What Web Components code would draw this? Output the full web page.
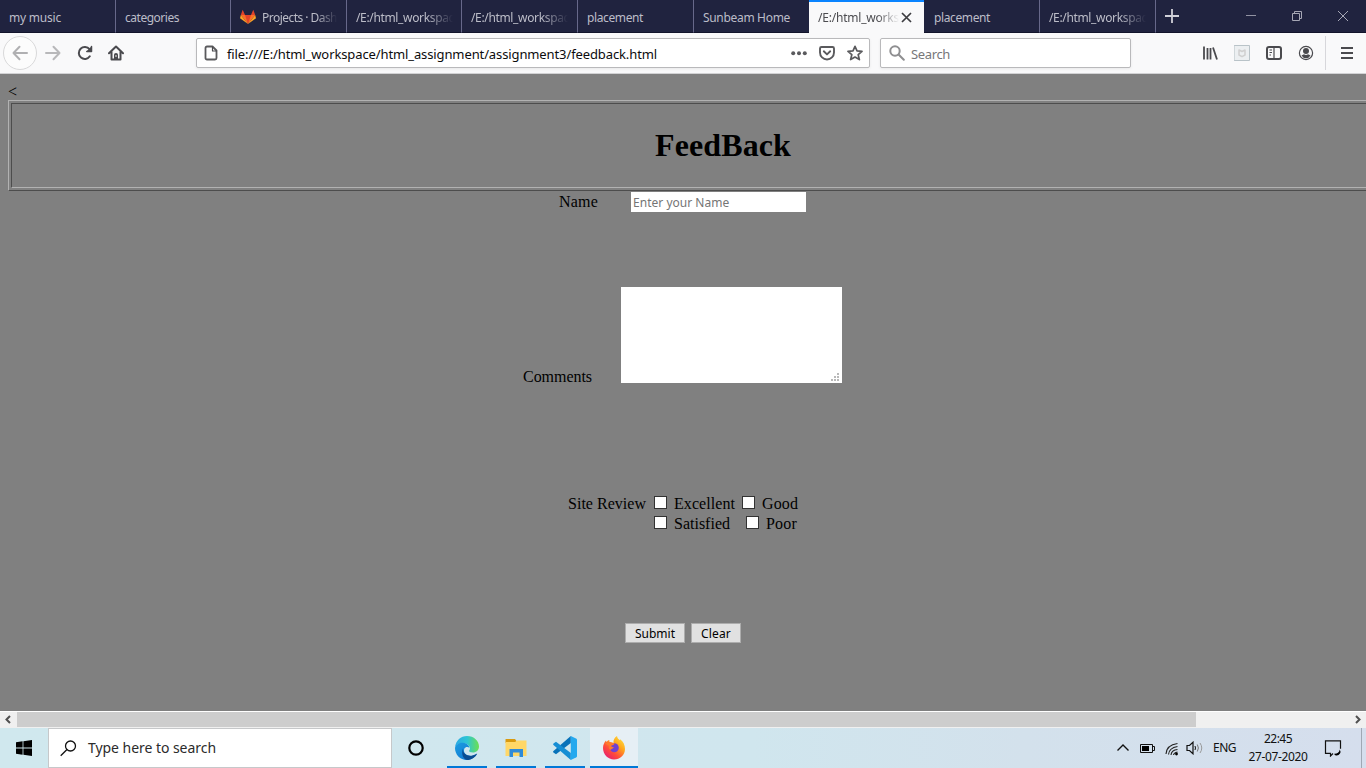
<!DOCTYPE html>
<html lang="en">
<head>
<meta charset="utf-8">
<title>Feedback</title>
<style>
html,body{margin:0;height:100%;overflow:hidden}
</style>
</head>
<body>
<desktop-screen></desktop-screen>
<script>
const define = (name, html, setup) => {
  const t = document.createElement('template');
  t.innerHTML = html;
  customElements.define(name, class extends HTMLElement {
    connectedCallback() {
      if (this.shadowRoot) return;
      this.attachShadow({mode: 'open'}).append(t.content.cloneNode(true));
      if (setup) setup.call(this);
    }
  });
};

/* Single line of text, tracked so that it fills the width in its "w" attribute. */
define('fit-text', `<style>:host{display:block;white-space:nowrap;flex:none}span{display:inline-block;white-space:pre}</style><span><slot></slot></span>`, function () {
  const w = +this.getAttribute('w');
  if (!w) return;
  const s = this.shadowRoot.querySelector('span');
  this.style.width = w + 'px';
  s.style.letterSpacing = '0';
  const r = s.getBoundingClientRect().width;
  if (r) s.style.letterSpacing = ((w - r) / this.textContent.length).toFixed(3) + 'px';
});

define('browser-tab', `<style>
:host{display:flex;box-sizing:border-box;height:33px;padding-left:9px;align-items:center;border-right:1px solid #67688a;border-bottom:1px solid #12142b;color:#bcbdc8;font:12px/18px "Noto Sans",sans-serif;overflow:hidden;flex:none}
:host([last-plain]),:host([active]){border-right:0}
:host([active]){background:#f9f9fa;color:#4c4c50;border-top:2px solid #0a84ff;border-bottom:0;padding-bottom:2px}
.label{padding-top:4px;flex:none;width:98px}
:host([active]) .label{width:82px;padding-top:3px}
:host([icon]) .label{width:76px}
:host([fade]) .label{-webkit-mask:linear-gradient(90deg,#000 72%,transparent 99%);mask:linear-gradient(90deg,#000 72%,transparent 99%)}
.fox{display:none;width:16px;height:16px;margin:2px 6px 0 0;flex:none}
:host([icon]) .fox{display:block}
.x{display:none;width:11px;height:11px;margin:2px 0 0 1px;flex:none}
:host([active]) .x{display:block}
</style>
<svg class="fox" viewBox="0 0 16 16"><path fill="#e24329" d="M8 15 3 6h10z"/><path fill="#fc6d26" d="M8 15 .8 6H5zM8 15l7.200-9H11z"/><path fill="#fca326" d="M.8 6 0 9.200 8 15zM15.200 6l.8 3.200L8 15z"/><path fill="#e24329" d="M.8 6 2.700.8 5 6zM15.200 6 13.300.8 11 6z"/></svg>
<div class="label"><slot></slot></div>
<svg class="x" viewBox="0 0 11 11"><path d="M1 1l9 9M10 1l-9 9" stroke="#3c3c40" stroke-width="1.700"/></svg>`);

define('tab-strip', `<style>
:host{display:flex;height:33px;background:#20233f;box-shadow:inset 0 -1px #12142b;flex:none}
.plus{width:14px;height:14px;margin:9px 0 0 9px}
.win{width:12px;height:12px;margin-top:10px}
</style>
<browser-tab style="width:116px"><fit-text w="52">my music</fit-text></browser-tab>
<browser-tab style="width:115px"><fit-text w="54">categories</fit-text></browser-tab>
<browser-tab icon fade style="width:116px"><fit-text w="75">Projects · Dash</fit-text></browser-tab>
<browser-tab fade style="width:115px"><fit-text w="98">/E:/html_workspac</fit-text></browser-tab>
<browser-tab fade style="width:116px"><fit-text w="98">/E:/html_workspac</fit-text></browser-tab>
<browser-tab style="width:116px"><fit-text w="56">placement</fit-text></browser-tab>
<browser-tab last-plain style="width:115px"><fit-text w="87">Sunbeam Home</fit-text></browser-tab>
<browser-tab active fade style="width:115px"><fit-text w="81">/E:/html_works</fit-text></browser-tab>
<browser-tab style="width:116px;padding-left:10px"><fit-text w="56">placement</fit-text></browser-tab>
<browser-tab fade style="width:116px"><fit-text w="98">/E:/html_workspac</fit-text></browser-tab>
<svg class="plus" viewBox="0 0 14 14"><path d="M7 0v14M0 7h14" stroke="#d0d0d8" stroke-width="1.800"/></svg>
<svg class="win" style="margin-left:66px" viewBox="0 0 12 12"><path d="M1 5.500h10" stroke="#9293a3"/></svg>
<svg class="win" style="margin-left:34px" viewBox="0 0 12 12"><path d="M1.500 3.500h7v7h-7zM3.500 3V1.500h7v7H9" fill="none" stroke="#a6a7b5"/></svg>
<svg class="win" style="margin-left:34px" viewBox="0 0 12 12"><path d="M1 1l10 10M11 1L1 11" stroke="#a6a7b5"/></svg>`);

define('nav-bar', `<style>
:host{display:flex;box-sizing:border-box;height:41px;background:#f9f9fa;border-bottom:1px solid #d2d2d4;align-items:flex-start;flex:none;font:13px/20px "Noto Sans",sans-serif}
svg{display:block;flex:none;width:16px;height:16px;margin-top:12px;fill:none;stroke:#4a4a4e;stroke-width:2;stroke-linecap:round;stroke-linejoin:round}
.back{box-sizing:border-box;width:34px;height:34px;margin:3px 0 0 3px;border:1px solid #d9d9da;border-radius:50%;background:#fcfcfc}
.back svg{margin:8px}
.box{display:flex;box-sizing:border-box;height:30px;margin-top:5px;border:1px solid #b9b9bb;border-radius:2px;background:#fff;box-shadow:0 1px 3px #0001}
.box svg{margin-top:6px}
.url{width:674px;margin-left:72px}.find{width:251px;margin-left:10px}
fit-text{margin-top:5px}
.sep{width:1px;height:34px;margin:3px 0 0 11px;background:#d7d7db}
</style>
<div class="back"><svg viewBox="0 0 16 16" style="stroke:#b0b0b2"><path d="M15 8H1.500M7.500 1.800 1.500 8l6 6.200"/></svg></div>
<svg style="margin-left:8px;stroke:#b8b8ba" viewBox="0 0 16 16"><path d="M1 8h13.500M8.500 1.800l6 6.200-6 6.200"/></svg>
<svg style="margin-left:16px" viewBox="0 0 16 16"><path d="M12.800 11.300A6 6 0 1 1 12.500 4.200"/><path d="M14.800 1v5.500H9.300z" fill="#4a4a4e" stroke="none"/><path d="M14.500 1.500v5H9.800" stroke-width="1.500"/></svg>
<svg style="margin-left:15px" viewBox="0 0 16 16"><path d="M1 8.200l7-6.700 7 6.700M3.500 7v7.500h9V7"/><path d="M6 14V9.500q0-1.500 2-1.500t2 1.500V14z" fill="#4a4a4e" stroke="none"/><path d="M8 10.500v1" stroke="#fff" style="stroke:#fff;stroke-width:1"/></svg>
<div class="box url">
<svg style="margin-left:6px" viewBox="0 0 16 16"><path d="M4 1.500h5.500l4 4V13a1.500 1.500 0 0 1-1.500 1.500H4A1.500 1.500 0 0 1 2.500 13V3A1.500 1.500 0 0 1 4 1.500z" style="stroke:#5a5a5d;stroke-width:1.800"/><path d="M9.500 2v4h4" stroke-width="1.200"/></svg>
<fit-text w="430" style="margin-left:8px;color:#0c0c0d">file:///E:/html_workspace/html_assignment/assignment3/feedback.html</fit-text>
<svg style="margin-left:134px" viewBox="0 0 16 16"><g fill="#5a5a5d" stroke="none"><circle cx="2.200" cy="8.200" r="2"/><circle cx="8" cy="8.200" r="2"/><circle cx="13.800" cy="8.200" r="2"/></g></svg>
<svg style="margin-left:12px" viewBox="0 0 16 16"><path d="M2.500 2h11q1.500 0 1.500 1.500V7.500a7 7 0 0 1-14 0V3.500Q1 2 2.500 2zM4.800 6.300 8 9.400l3.200-3.100" style="stroke:#5a5a5d;stroke-width:1.900"/></svg>
<svg style="margin-left:12px" viewBox="0 0 16 16"><path d="M8 1.300l2 4.600 5 .5-3.800 3.300 1.200 4.900L8 12l-4.400 2.600 1.200-4.900L1 6.400l5-.5z" style="stroke:#5a5a5d;stroke-width:1.700"/></svg>
</div>
<div class="box find">
<svg style="margin-left:8px;stroke:#8e8e90" viewBox="0 0 16 16"><circle cx="6" cy="6" r="4.700"/><path d="M9.800 9.800l5 5"/></svg>
<fit-text w="39" style="margin-left:6px;color:#77777a">Search</fit-text>
</div>
<svg style="margin-left:71px" viewBox="0 0 16 16"><path d="M2 1.500v13M5.500 3v11.500M8.500 3v11.500M11 2.500l4 12" style="stroke-width:1.800;stroke-linecap:butt"/></svg>
<svg style="margin-left:16px;stroke:#b9c3c8;stroke-width:1" viewBox="0 0 16 16"><path d="M.5.500h15v15H.5z" fill="#eceff1"/><path d="M5 5l3 1.500L11 5v5l-3 1.700L5 10z" style="stroke-width:1.500;stroke:#d0d0d0"/></svg>
<svg style="margin-left:16px" viewBox="0 0 16 16"><rect x="1" y="2" width="14" height="12" rx="2"/><path d="M8 2v12M3.500 5h2.500M3.500 7.500h2.500M3.500 10h1.500" style="stroke-width:1.200;stroke-linecap:butt"/></svg>
<svg style="margin-left:16px" viewBox="0 0 16 16"><circle cx="8" cy="8" r="6.600" style="stroke-width:1.200"/><circle cx="8" cy="6" r="3" fill="#4a4a4e" stroke="none"/><path d="M3.500 10.500q1.500-.8 2.500-1.200 2 1.200 4 0 1 .4 2.500 1.200-1.500 2.700-4.500 2.700t-4.500-2.700z" fill="#4a4a4e" stroke="none"/></svg>
<div class="sep"></div>
<svg style="margin-left:14px" viewBox="0 0 16 16"><path d="M1 3h12M1 8h12M1 13h12" style="stroke-linecap:butt"/></svg>`);

define('check-item', `<style>
:host{display:flex;height:20px}
input{appearance:none;box-sizing:border-box;width:13px;height:13px;margin:3px 7px 0 0;border:1px solid #333;background:#fff;flex:none}
label{display:flex;line-height:18px}
</style><label><input type="checkbox"><slot></slot></label>`);

define('feedback-form', `<style>
:host{display:flex;flex-direction:column;box-sizing:border-box;height:637px;padding:9px 0 0 8px;background:#808080;color:#000;overflow:hidden;flex:none;font:16px/18px "Liberation Serif",serif}
.stray{height:17px;flex:none}
.frame{box-sizing:border-box;width:1430px;height:91px;padding:2px;border:1px solid;border-color:#b2b2b2 #4d4d4d #4d4d4d #b2b2b2;flex:none}
.cell{display:flex;justify-content:center;align-items:center;box-sizing:border-box;height:85px;padding-bottom:1px;border:1px solid;border-color:#4d4d4d #b2b2b2 #b2b2b2 #4d4d4d}
h1{margin:0;font-size:32px;line-height:36px}
.row{display:flex;flex:none}
input,textarea,button{box-sizing:border-box;margin:0;border-radius:0;font:12px/16px "Noto Sans",sans-serif}
input{width:175px;height:20px;padding:1px 2px 0;border:0;background:#fff;letter-spacing:.02px}
input::placeholder{color:#757575;opacity:1}
.area{position:relative;display:flex;margin-left:29px}
textarea{width:221px;height:96px;border:0;background:#fff;resize:none;display:block}
.grip{position:absolute;right:3px;bottom:2px;width:8px;height:8px}
button{display:flex;justify-content:center;height:20px;padding:2px 0 0;border:1px solid #adadad;background:#e1e1e1;color:#000}
</style>
<div class="stray">&lt;</div>
<div class="frame"><div class="cell"><h1><fit-text w="136">FeedBack</fit-text></h1></div></div>
<div class="row" style="margin:1px 0 0 551px"><fit-text w="39" style="margin-top:1px">Name</fit-text><input style="margin-left:33px" placeholder="Enter your Name"></div>
<div class="row" style="margin:75px 0 0 515px;align-items:flex-end"><fit-text w="69" style="margin-bottom:-3px">Comments</fit-text>
<div class="area"><textarea></textarea><svg class="grip" viewBox="0 0 8 8"><path fill="#b9b9b9" d="M6 0h2v2H6zM3 3h2v2H3zM6 3h2v2H6zM0 6h2v2H0zM3 6h2v2H3zM6 6h2v2H6z"/></svg></div></div>
<div class="row" style="margin:110px 0 0 560px"><fit-text w="78" style="margin-top:2px">Site Review</fit-text>
<div style="margin-left:8px">
<div class="row"><check-item><fit-text w="61" style="margin-top:2px">Excellent</fit-text></check-item><check-item style="margin-left:7px"><fit-text w="36" style="margin-top:2px">Good</fit-text></check-item></div>
<div class="row"><check-item><fit-text w="56" style="margin-top:2px">Satisfied</fit-text></check-item><check-item style="margin-left:16px"><fit-text w="31" style="margin-top:2px">Poor</fit-text></check-item></div>
</div></div>
<div class="row" style="margin:90px 0 0 617px"><button style="width:60px"><fit-text w="40">Submit</fit-text></button><button style="width:50px;margin-left:6px"><fit-text w="30">Clear</fit-text></button></div>`);

define('scroll-bar', `<style>
:host{display:flex;box-sizing:border-box;height:17px;background:#f0f0f0;border-top:1px solid #fff;flex:none}
svg{width:17px;height:15px;flex:none}
.thumb{width:1179px;height:15px;background:#cdcdcd}
.rest{flex:1}
</style><svg viewBox="0 0 17 15"><path d="M10 4 6.500 7.500 10 11" fill="none" stroke="#505050" stroke-width="2"/></svg><div class="thumb"></div><div class="rest"></div><svg viewBox="0 0 17 15"><path d="M7 4l3.500 3.500L7 11" fill="none" stroke="#505050" stroke-width="2"/></svg>`);

define('task-button', `<style>
:host{display:flex;box-sizing:border-box;width:40px;height:40px;align-items:center;justify-content:center;border-bottom:2px solid #0078d7;padding-top:2px;flex:none}
:host([active]){width:48px;background:#e6eff5}
::slotted(svg){width:24px;height:24px;display:block}
</style><slot></slot>`);

define('task-bar', `<style>
:host{display:flex;height:40px;background:linear-gradient(90deg,#d0e8ee,#d0e6ee 55%,#d3e1ec 75%,#d5deed);flex:none;color:#111;font:12px/18px "Noto Sans",sans-serif}
svg{display:block;flex:none}
.search{display:flex;box-sizing:border-box;width:344px;height:40px;margin-left:16px;background:#fff;border:1px solid #c6c8ca}
.clock{display:flex;flex-direction:column;align-items:center;width:60px;margin:2px 0 0 12px}
.edge{width:1px;height:40px;margin-left:19px;background:#9fa8b4}
</style>
<svg width="16" height="16" style="margin:12px 0 0 16px" viewBox="0 0 16 16"><path d="M0 2.200 6.600 1.300V7.600H0zM7.400 1.200 16 0v7.600H7.400zM0 8.400h6.600v6.300L0 13.800zM7.400 8.400H16V16l-8.600-1.200z"/></svg>
<div class="search"><svg width="17" height="17" style="margin:11px 0 0 11px" viewBox="0 0 17 17"><circle cx="10.500" cy="6" r="5" fill="none" stroke="#111" stroke-width="1.300"/><path d="M7 9.500.7 15.800" stroke="#111" stroke-width="1.300"/></svg>
<fit-text w="128" style="margin:10px 0 0 11px;color:#2b2b2b;font-size:14px">Type here to search</fit-text></div>
<svg width="16" height="16" style="margin:12px 0 0 16px" viewBox="0 0 16 16"><circle cx="8" cy="8" r="6.700" fill="none" stroke="#000" stroke-width="2.200"/></svg>
<task-button style="margin-left:23px"><svg viewBox="0 0 24 24"><defs><linearGradient id="a" x2="1"><stop stop-color="#2aa8e4"/><stop offset=".5" stop-color="#2dc5d5"/><stop offset="1" stop-color="#6de04f"/></linearGradient><linearGradient id="b" y2="1"><stop stop-color="#1c9de0"/><stop offset="1" stop-color="#0e6fd0"/></linearGradient></defs>
<path fill="url(#a)" d="M.1 11C.8 4.500 5.800 0 12 0c7 0 12 5 12 10.500 0 3.800-2.800 6-6 6-3 0-4.300-1-3.800-2 1.200-1.400 1-3.500-.6-5C10 6.200 3 6 .1 11z"/>
<path fill="url(#b)" d="M0 12C.3 8.500 4 6.500 8 6.700c3.500.2 6.300 2.400 6.400 5.300-1-1.600-4-1.500-5.100.8-1.700 4.500 3.200 8 8 7 2-.4 3.700-1.500 4.700-2.300C20.500 21 16.500 24 12 24 5 24 0 18.500 0 12z"/>
<path fill="#0b4d92" d="M8 12.500c-.5 5 4 8 9.500 7 2-.4 3.800-1.400 4.700-2C20.500 21.500 16 24 12 24 8 23 6 18 8 12.500z"/></svg></task-button>
<task-button style="margin-left:9px"><svg viewBox="0 0 24 24"><path fill="#d99a10" d="M1.500 3.500q0-.5.5-.5h9l1.500 2-1 2h-10z"/><path fill="#ffd767" d="M1.500 6h9.500l2-1.500h9.500V20h-21z"/><path fill="#2f8bd8" d="M5.500 13h13.500v8h-3.500v-4.500H9V21H5.500z"/></svg></task-button>
<task-button style="margin-left:9px"><svg viewBox="0 0 24 24"><path fill="#0872b9" d="M17.800 0v7L3 18.200.5 16.500q-.8-.8 0-1.500z"/><path fill="#168ed4" d="M17.800 24v-7L3 5.800.5 7.500q-.8.800 0 1.500z"/><path fill="#25a9ee" d="M17.800 0 23 2.400q1 .5 1 1.400v16.400q0 .9-1 1.400L17.800 24z"/></svg></task-button>
<task-button active style="margin-left:5px"><svg viewBox="0 0 24 24"><defs><linearGradient id="f" x1="1" x2=".2" y2="1"><stop stop-color="#fff04a"/><stop offset=".4" stop-color="#ffa51c"/><stop offset=".7" stop-color="#ff4b3a"/><stop offset="1" stop-color="#e51b75"/></linearGradient></defs>
<path fill="url(#f)" d="M1 12c0-3 1.200-5.500 3-7.500L4.500 6c1-1.300 2-1.800 2.800-2L7.500 6l4 1c-.3-3 1-5.500 3.500-7 .2 2 1.500 3 2.800 4.300l.3-1C21.500 6 23 9 23 13c0 6-5 10.500-11 10.500S1 18.500 1 12z"/><circle cx="12.300" cy="11.800" r="4.500" fill="#7140d0"/><path fill="#ff7a2b" d="M3 7.500 7.500 6l5 1.200c-.3 1.600-1.700 2-3 2.300-.8 1 .8 2 2.500 1.600C11.300 13 9 12.800 8.500 14c-1.500-.4-1.700-3-1-4z"/></svg></task-button>
<svg width="14" height="9" style="margin:15px 0 0 478px" viewBox="0 0 14 9"><path d="M1.500 7.500 7 2l5.500 5.500" fill="none" stroke="#111" stroke-width="1.400"/></svg>
<svg width="15" height="9" style="margin:16px 0 0 10px" viewBox="0 0 15 9"><path d="M.5.500h12v8H.5zM13 2.500h1.500v4H13" fill="none" stroke="#111"/><path d="M2 2h7v5H2z"/></svg>
<svg width="14" height="14" style="margin:14px 0 0 10px" viewBox="0 0 14 14"><g fill="none" stroke="#222" stroke-width="1.100"><path d="M1 12Q1.500 3 12.500 1.500M3.500 12.500Q4 6 12.500 4.500M6 13q.5-5 6.500-5.500M8.500 13q.5-2.500 4-3"/></g><circle cx="11.500" cy="12" r="1.400"/></svg>
<svg width="18" height="14" style="margin:13px 0 0 7px" viewBox="0 0 18 14"><path d="M1 4.500h2.500L7 1.200v11.600L3.500 9.500H1z" fill="none" stroke="#111" stroke-width="1.200"/><path d="M9 5q1 2 0 4" fill="none" stroke="#111"/><path d="M11.300 3.500q2.200 3.500 0 7" fill="none" stroke="#777"/><path d="M14 2q3.500 5 0 10" fill="none" stroke="#999"/></svg>
<fit-text w="23" style="margin:11px 0 0 9px">ENG</fit-text>
<div class="clock"><fit-text w="28">22:45</fit-text><fit-text w="59">27-07-2020</fit-text></div>
<svg width="18" height="17" style="margin:12px 0 0 16px" viewBox="0 0 18 17"><path d="M9 13.500 6.500 16v-2.700h-5V.800h15v8" fill="none" stroke="#111" stroke-width="1.200"/><path d="M15.800 9.500q1.200 2 .2 4-1.500 2.500-4 2-1.500-.3-1.800-1.700 4.600.2 5.600-4.300z"/></svg>
<div class="edge"></div>`);

define('desktop-screen', `<style>
:host{display:flex;flex-direction:column;width:1366px;height:768px;overflow:hidden}
</style><tab-strip></tab-strip><nav-bar></nav-bar><feedback-form></feedback-form><scroll-bar></scroll-bar><task-bar></task-bar>`);
</script>
</body>
</html>
